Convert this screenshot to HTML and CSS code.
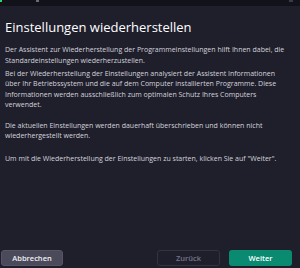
FILE: index.html
```html
<!DOCTYPE html>
<html lang="de">
<head>
<meta charset="utf-8">
<link rel="stylesheet" href="styles.css">
</head>
<body>
<div class="window">
  <div class="titlebar"><span class="dot"></span><span class="mark"></span><span class="mark mark-right"></span></div>
  <div class="content">
    <h1 class="title">Einstellungen wiederherstellen</h1>
    <p class="p p1">Der Assistent zur Wiederherstellung der Programmeinstellungen hilft Ihnen dabei, die Standardeinstellungen wiederherzustellen.</p>
    <p class="p p2">Bei der Wiederherstellung der Einstellungen analysiert der Assistent Informationen über Ihr Betriebssystem und die auf dem Computer installierten Programme. Diese Informationen werden ausschließlich zum optimalen Schutz Ihres Computers verwendet.</p>
    <p class="p p3">Die aktuellen Einstellungen werden dauerhaft überschrieben und können nicht wiederhergestellt werden.</p>
    <p class="p p4">Um mit die Wiederherstellung der Einstellungen zu starten, klicken Sie auf "Weiter".</p>
  </div>
  <div class="footer">
    <button class="btn btn-cancel">Abbrechen</button>
    <div class="spacer"></div>
    <button class="btn btn-back">Zurück</button>
    <button class="btn btn-next">Weiter</button>
  </div>
</div>
</body>
</html>
```
FILE: styles.css
```css
* { box-sizing: border-box; }
html, body { margin: 0; padding: 0; }
body {
  width: 300px;
  height: 268px;
  background: #1f1e2b;
  font-family: "Open Sans", "Noto Sans", sans-serif;
  overflow: hidden;
}
.window {
  width: 300px;
  height: 268px;
  display: flex;
  flex-direction: column;
}
.titlebar {
  height: 6px;
  background: #12121b;
  flex: none;
  position: relative;
}
.dot {
  position: absolute;
  left: 0; top: 0;
  width: 2px; height: 2px;
  background: #2bd46a;
}
.mark {
  position: absolute;
  left: 36px; top: 0;
  width: 3px; height: 2px;
  background: #6a6a78;
}
.mark-right { left: 289px; width: 4px; background: #3a3a48; }
.content {
  flex: 1;
  padding: 0 12px 0 5px;
}
.title {
  margin: 11px 0 0;
  font-size: 13px;
  font-weight: 400;
  color: #ffffff;
  line-height: 20px;
}
.p {
  margin: 0;
  font-size: 7px;
  line-height: 10.5px;
  color: #d4d4dc;
}
.p1 { margin-top: 8px; }
.p2 { margin-top: 2.5px; }
.p3 { margin-top: 10px; }
.p4 { margin-top: 12px; }
.footer {
  flex: none;
  display: flex;
  align-items: center;
  padding: 0 8px 2px 1px;
  gap: 9px;
  height: 18px;
}
.spacer { flex: 1; }
.btn {
  height: 16px;
  width: 62px;
  border-radius: 3px;
  font-family: inherit;
  font-size: 7.5px;
  font-weight: 600;
  padding: 0;
  border: 1px solid transparent;
}
.btn-cancel { background: #4a4a5a; color: #f0f0f4; border-color: #55556a; }
.btn-back { background: transparent; color: #77768a; border-color: #33323f; width: 63px; }
.btn-next { background: #0b8a72; color: #ffffff; width: 63px; }
```
